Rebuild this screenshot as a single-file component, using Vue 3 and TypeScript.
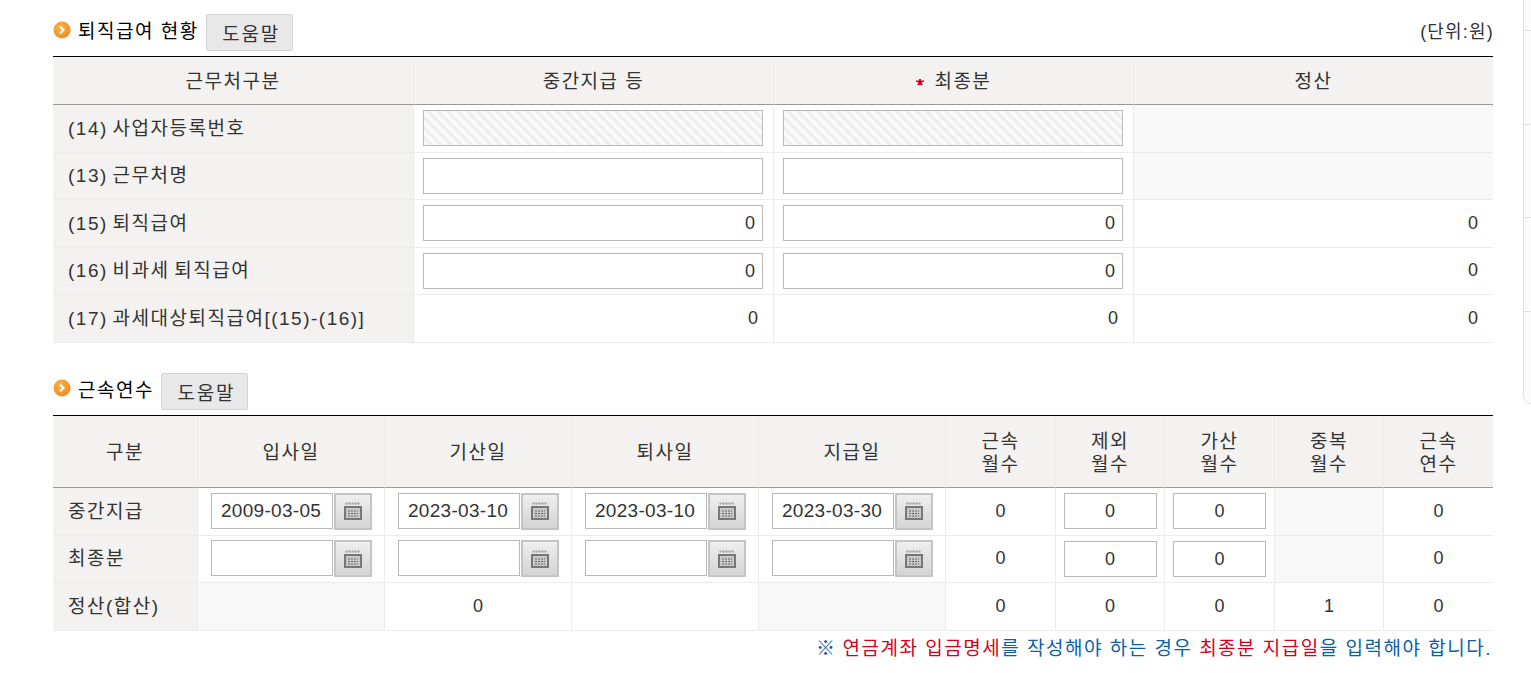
<script setup lang="ts">
type Cell = { t?: string; k: 'num' | 'input' | 'inputR' | 'hatch' | 'empty' | 'date' | 'blank' | 'center' | 'boxC' };

const rows1: { label: string; cells: Cell[] }[] = [
  { label: '(14) 사업자등록번호', cells: [{ k: 'hatch' }, { k: 'hatch' }, { k: 'empty' }] },
  { label: '(13) 근무처명', cells: [{ k: 'input' }, { k: 'input' }, { k: 'empty' }] },
  { label: '(15) 퇴직급여', cells: [{ k: 'inputR', t: '0' }, { k: 'inputR', t: '0' }, { k: 'num', t: '0' }] },
  { label: '(16) 비과세 퇴직급여', cells: [{ k: 'inputR', t: '0' }, { k: 'inputR', t: '0' }, { k: 'num', t: '0' }] },
  { label: '(17) 과세대상퇴직급여[(15)-(16)]', cells: [{ k: 'num', t: '0' }, { k: 'num', t: '0' }, { k: 'num', t: '0' }] },
];

const heads2 = [['구분'], ['입사일'], ['기산일'], ['퇴사일'], ['지급일'], ['근속', '월수'], ['제외', '월수'], ['가산', '월수'], ['중복', '월수'], ['근속', '연수']];
const colW = [144, 187, 187, 187, 187, 110, 109, 110, 109, 110];

const rows2: { label: string; cells: Cell[] }[] = [
  {
    label: '중간지급',
    cells: [
      { k: 'date', t: '2009-03-05' }, { k: 'date', t: '2023-03-10' }, { k: 'date', t: '2023-03-10' }, { k: 'date', t: '2023-03-30' },
      { k: 'center', t: '0' }, { k: 'boxC', t: '0' }, { k: 'boxC', t: '0' }, { k: 'empty' }, { k: 'center', t: '0' },
    ],
  },
  {
    label: '최종분',
    cells: [
      { k: 'date', t: '' }, { k: 'date', t: '' }, { k: 'date', t: '' }, { k: 'date', t: '' },
      { k: 'center', t: '0' }, { k: 'boxC', t: '0' }, { k: 'boxC', t: '0' }, { k: 'empty' }, { k: 'center', t: '0' },
    ],
  },
  {
    label: '정산(합산)',
    cells: [
      { k: 'empty' }, { k: 'center', t: '0' }, { k: 'blank' }, { k: 'empty' },
      { k: 'center', t: '0' }, { k: 'center', t: '0' }, { k: 'center', t: '0' }, { k: 'center', t: '1' }, { k: 'center', t: '0' },
    ],
  },
];
</script>

<template>
  <div class="page">
    <div class="title-row">
      <svg class="bullet" viewBox="0 0 18 18" aria-hidden="true">
        <defs>
          <radialGradient id="bg1" cx="40%" cy="35%" r="70%">
            <stop offset="0" stop-color="#fbb54a" />
            <stop offset="1" stop-color="#ee8a1c" />
          </radialGradient>
        </defs>
        <circle cx="9" cy="9" r="8.5" fill="url(#bg1)" />
        <path d="M7 5.500 10.500 9 7 12.500" fill="none" stroke="#fff" stroke-width="2" />
      </svg>
      <h2 class="title">퇴직급여 현황</h2>
      <button class="help" type="button">도움말</button>
      <span class="unit">(단위:원)</span>
    </div>

    <table class="grid">
      <colgroup><col v-for="n in 4" :key="n" class="c25" /></colgroup>
      <thead>
        <tr>
          <th>근무처구분</th>
          <th>중간지급 등</th>
          <th>
            <svg class="star" viewBox="0 0 8 6" aria-hidden="true"><path d="M3 0h2v1.500h3v1.500H6v1.500l1 1.500H1l1-1.500V3H0V1.500h3z" fill="#d9001b" /></svg>
            최종분
          </th>
          <th>정산</th>
        </tr>
      </thead>
      <tbody>
        <tr v-for="r in rows1" :key="r.label">
          <td class="label">{{ r.label }}</td>
          <td v-for="(c, i) in r.cells" :key="i" :class="{ shade: c.k === 'empty', right: c.k === 'num' }">
            <div v-if="c.k === 'hatch'" class="box hatch"></div>
            <div v-else-if="c.k === 'input'" class="box"></div>
            <div v-else-if="c.k === 'inputR'" class="box boxr">{{ c.t }}</div>
            <template v-else-if="c.k === 'num'">{{ c.t }}</template>
          </td>
        </tr>
      </tbody>
    </table>

    <div class="title-row second">
      <svg class="bullet" viewBox="0 0 18 18" aria-hidden="true">
        <defs>
          <radialGradient id="bg2" cx="40%" cy="35%" r="70%">
            <stop offset="0" stop-color="#fbb54a" />
            <stop offset="1" stop-color="#ee8a1c" />
          </radialGradient>
        </defs>
        <circle cx="9" cy="9" r="8.5" fill="url(#bg2)" />
        <path d="M7 5.500 10.500 9 7 12.500" fill="none" stroke="#fff" stroke-width="2" />
      </svg>
      <h2 class="title">근속연수</h2>
      <button class="help" type="button">도움말</button>
    </div>

    <table class="grid g2">
      <colgroup>
        <col v-for="(w, i) in colW" :key="i" :style="{ width: w + 'px' }" />
      </colgroup>
      <thead>
        <tr>
          <th v-for="(h, i) in heads2" :key="i">
            <template v-for="(line, j) in h" :key="j">{{ line }}<br v-if="j < h.length - 1" /></template>
          </th>
        </tr>
      </thead>
      <tbody>
        <tr v-for="r in rows2" :key="r.label">
          <td class="label">{{ r.label }}</td>
          <td
            v-for="(c, i) in r.cells"
            :key="i"
            :class="{ shade: c.k === 'empty', center: c.k === 'center' || c.k === 'boxC' }"
          >
            <div v-if="c.k === 'date'" class="date">
              <div class="box dbox">{{ c.t }}</div>
              <button class="cal" type="button" aria-label="달력">
                <svg viewBox="0 0 18 18" width="18" height="18" aria-hidden="true">
                  <path d="M1.500 1.500h15" stroke="#9a9a9a" stroke-width="2" stroke-dasharray="2 1" fill="none" />
                  <rect x="1" y="5" width="16" height="12" fill="#c9c9c9" stroke="#777" stroke-width="2" />
                  <path d="M4 9h10M4 11.500h10M4 14h10" stroke="#666" stroke-width="1.200" stroke-dasharray="2 1" fill="none" />
                </svg>
              </button>
            </div>
            <div v-else-if="c.k === 'boxC'" class="box boxc">{{ c.t }}</div>
            <template v-else-if="c.k === 'center'">{{ c.t }}</template>
          </td>
        </tr>
      </tbody>
    </table>

    <p class="note">
      <span class="mark">※</span>
      <em>연금계좌 입금명세</em>를 작성해야 하는 경우 <em>최종분 지급일</em>을 입력해야 합니다.
    </p>

    <aside class="side" aria-hidden="true">
      <div class="seg s1"></div>
      <div class="seg s2"></div>
      <div class="seg s3"></div>
      <div class="seg s4"></div>
    </aside>
  </div>
</template>

<style scoped>
.page {
  position: relative;
  width: 1531px;
  height: 673px;
  overflow: hidden;
  box-sizing: border-box;
  padding: 14px 38px 0 53px;
  background: #fff;
  font-family: "Liberation Sans", "Noto Sans CJK KR", sans-serif;
  font-size: 18px;
  color: #333;
}
.title-row {
  display: flex;
  align-items: center;
  height: 37px;
  margin-bottom: 5px;
}
.second { margin-top: 30px; }
.bullet { width: 18px; height: 18px; margin-right: 7px; margin-top: -6px; flex: none; }
.title {
  margin: -2px 7px 0 0;
  font-size: 19px;
  font-weight: 400;
  color: #000;
  letter-spacing: 1.500px;
  line-height: 1;
  white-space: nowrap;
}
.help {
  width: 87px;
  height: 37px;
  padding: 0 0 0 4px;
  border: 1px solid #d3d3d3;
  border-radius: 2px;
  background: #e8e8e8;
  font: inherit;
  font-size: 19px;
  color: #333;
  letter-spacing: 1.800px;
}
.unit { margin: -5px -1px 0 auto; font-size: 18px; letter-spacing: 1.200px; color: #333; }
.grid {
  width: 1440px;
  table-layout: fixed;
  border-collapse: separate;
  border-spacing: 0;
  border-top: 1px solid #000;
}
.c25 { width: 25%; }
th {
  height: 48px;
  padding: 2px 0 0;
  background: #f3f2f0;
  font-weight: 400;
  font-size: 19px;
  letter-spacing: 1.500px;
  text-align: center;
  border-left: 1px solid #ebebeb;
  border-bottom: 1px solid #999;
  box-sizing: border-box;
  line-height: 23px;
}
th:first-child { border-left: 0; }
.g2 th { height: 72px; padding-top: 3px; }
td {
  height: 47.500px;
  padding: 0 10px 0 9px;
  box-sizing: border-box;
  border-left: 1px solid #ebebeb;
  border-bottom: 1px solid #ebebeb;
  vertical-align: middle;
}
td:first-child { border-left: 0; }
.g2 tbody td { height: 48px; }
.g2 tbody tr:nth-child(2) td { height: 47px; }
.label {
  background: #f3f2f0;
  font-size: 19px;
  letter-spacing: 1.500px;
  word-spacing: -2px;
  white-space: nowrap;
  padding-left: 15px;
  padding-bottom: 4px;
}
.shade { background: #f8f8f8; }
.right { text-align: right; padding-right: 15px; }
.center { text-align: center; padding-left: 0; padding-right: 0; }
.box {
  box-sizing: border-box;
  height: 36px;
  border: 1px solid #b8b8b8;
  background: #fff;
  line-height: 34px;
  padding: 0 7px;
}
.boxr { text-align: right; }
.boxc { text-align: center; width: 93px; margin: 0 auto; }
.hatch {
  background: repeating-linear-gradient(45deg, #fafafa 0 4px, #eeeeee 4px 7px);
}
.date { display: flex; gap: 1px; padding-left: 4px; }
.dbox { width: 122px; padding: 0 9px; flex: none; white-space: nowrap; font-size: 19px; letter-spacing: .3px; }
.cal {
  width: 38px;
  height: 37px;
  padding: 0;
  flex: none;
  display: flex;
  align-items: center;
  justify-content: center;
  border: 2px solid #c4c4c4;
  background: linear-gradient(#efefef, #d4d4d4);
}
.star { width: 8px; height: 6px; margin-right: 4px; vertical-align: 3px; }
.note {
  margin: 6px 0 0;
  text-align: right;
  font-size: 19px;
  color: #0b5ea8;
  letter-spacing: 1.500px;
  line-height: 24px;
  padding-right: 1px;
}
.note em { font-style: normal; color: #d6001c; }
.mark { font-size: 19px; font-weight: 700; margin-right: 6px; color: #0a5596; }
.side {
  position: absolute;
  left: 1523px;
  top: -1px;
  width: 30px;
  height: 405px;
  box-sizing: border-box;
  border: 1px solid #dfe1e5;
  border-bottom-left-radius: 8px;
  background: #fbfbfe;
}
.seg { position: absolute; left: 0; right: 0; height: 1px; background: #dfe1e5; }
.s1 { top: 30px; }
.s2 { top: 124px; }
.s3 { top: 217px; }
.s4 { top: 311px; }
</style>
